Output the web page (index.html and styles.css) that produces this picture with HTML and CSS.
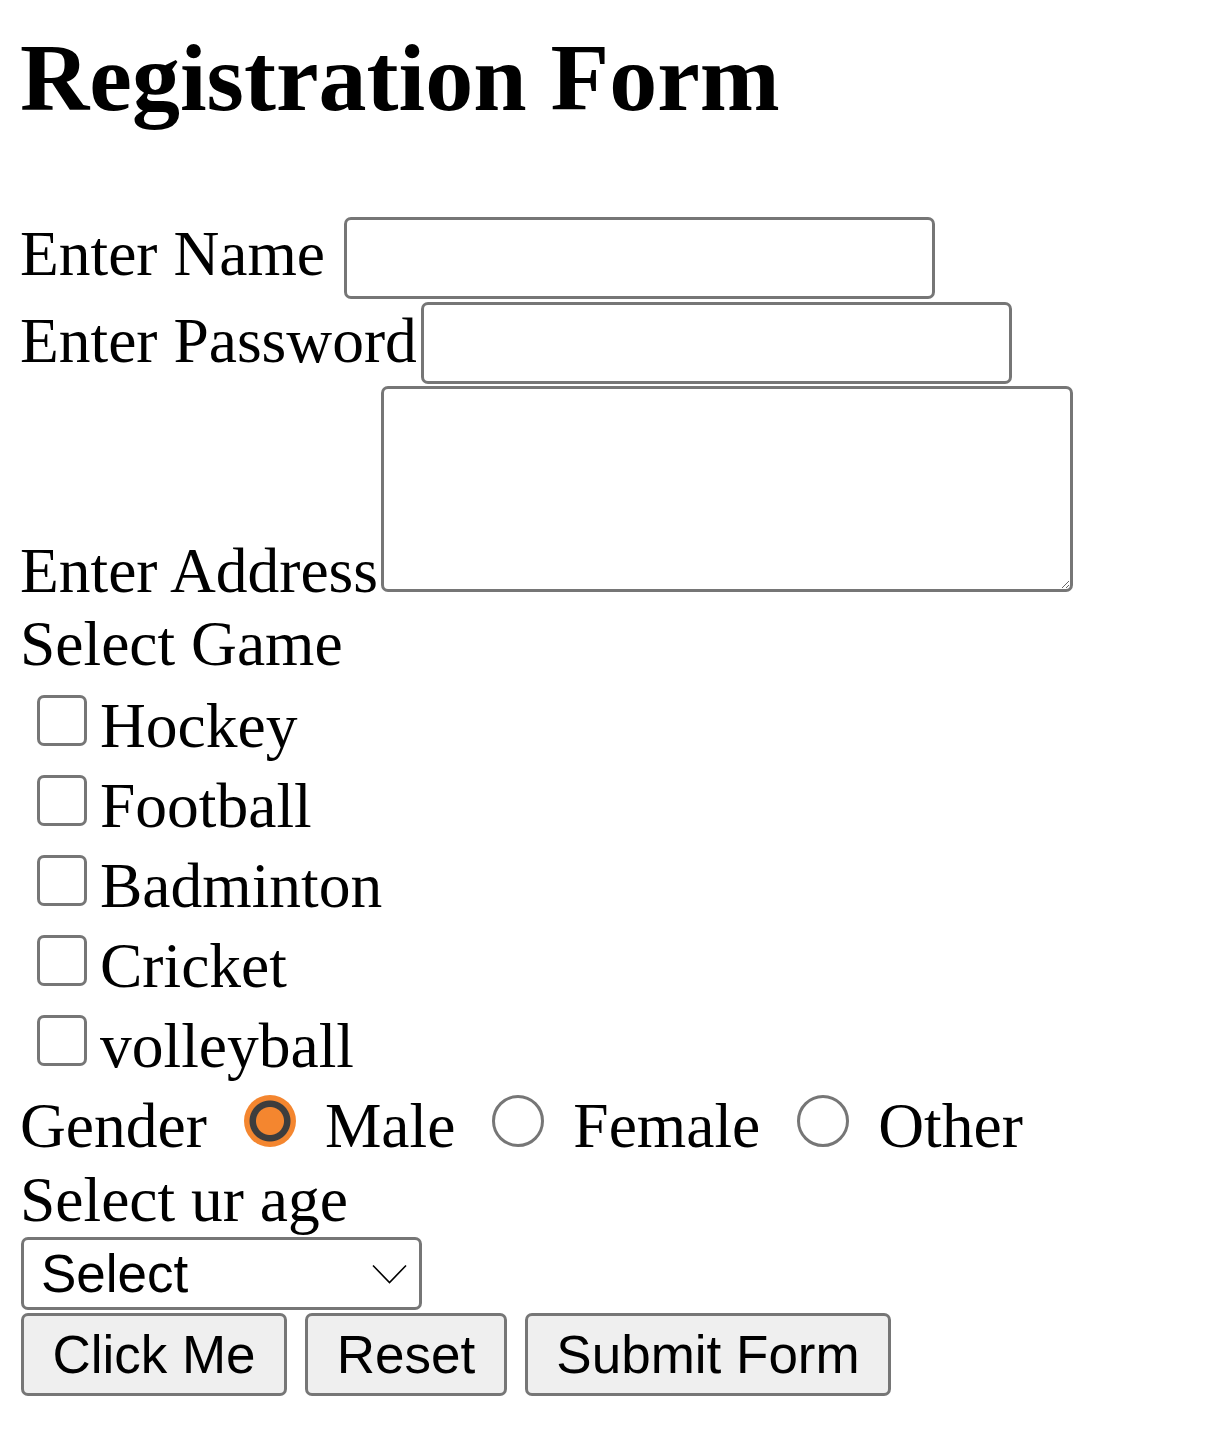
FILE: index.html
```html
<!DOCTYPE html>
<html lang="en">
<head>
<meta charset="utf-8">
<title>Registration Form</title>
<link rel="stylesheet" href="styles.css">
</head>
<body>
<div class="page">
  <h1 class="title">Registration Form</h1>
  <form class="form">
    <div class="row row-name">
      <label class="lbl lbl-name" for="name">Enter Name</label>
      <input class="field field-name" id="name" type="text">
    </div>
    <div class="row row-pass">
      <label class="lbl lbl-pass" for="pass">Enter Password</label>
      <input class="field field-pass" id="pass" type="password">
    </div>
    <div class="row row-addr">
      <label class="lbl lbl-addr" for="addr">Enter Address</label>
      <textarea class="area" id="addr"></textarea>
    </div>
    <div class="row row-text row-game">
      <span class="lbl lbl-game">Select Game</span>
    </div>
    <div class="checks">
      <div class="row row-check"><input class="chk" type="checkbox" id="g1"><label class="lbl lbl-chk" for="g1">Hockey</label></div>
      <div class="row row-check"><input class="chk" type="checkbox" id="g2"><label class="lbl lbl-chk" for="g2">Football</label></div>
      <div class="row row-check"><input class="chk" type="checkbox" id="g3"><label class="lbl lbl-chk" for="g3">Badminton</label></div>
      <div class="row row-check"><input class="chk" type="checkbox" id="g4"><label class="lbl lbl-chk" for="g4">Cricket</label></div>
      <div class="row row-check"><input class="chk" type="checkbox" id="g5"><label class="lbl lbl-chk" for="g5">volleyball</label></div>
    </div>
    <div class="row row-gender">
      <span class="lbl lbl-gender">Gender</span>
      <input class="rad" type="radio" name="gender" id="m" checked>
      <label class="lbl lbl-rad" for="m">Male</label>
      <input class="rad" type="radio" name="gender" id="f">
      <label class="lbl lbl-rad" for="f">Female</label>
      <input class="rad" type="radio" name="gender" id="o">
      <label class="lbl lbl-rad" for="o">Other</label>
    </div>
    <div class="row row-text row-age">
      <span class="lbl lbl-age">Select ur age</span>
    </div>
    <div class="select-wrap">
      <select class="sel">
        <option>Select</option>
        <option>18-25</option>
        <option>26-40</option>
        <option>40+</option>
      </select>
      <svg class="chev" width="35" height="20" viewBox="0 0 35 20" aria-hidden="true">
        <polyline points="1,1.5 17.5,18.5 34,1.5" fill="none" stroke="#000" stroke-width="1.6"/>
      </svg>
    </div>
    <div class="buttons">
      <button class="btn btn-click" type="button">Click Me</button>
      <button class="btn btn-reset" type="reset">Reset</button>
      <button class="btn btn-submit" type="submit">Submit Form</button>
    </div>
  </form>
</div>
</body>
</html>
```

FILE: styles.css
```css
html, body {
  margin: 0;
  padding: 0;
  background: #fff;
}

.page {
  padding: 0 20px;
  font-family: "Liberation Serif", "Times New Roman", serif;
  color: #000;
}

.title {
  margin: 23px 0 0;
  height: 110px;
  font-size: 96px;
  line-height: 110px;
  font-weight: bold;
}

.form {
  margin: 83px 0 0;
}

.row {
  display: flex;
  align-items: flex-start;
}

.lbl {
  font-size: 63.5px;
  line-height: 72px;
  white-space: nowrap;
}

/* text inputs */
.field {
  appearance: none;
  box-sizing: border-box;
  width: 591px;
  height: 82px;
  margin: 1px 0 0;
  padding: 0 8px;
  border: 3px solid #767676;
  border-radius: 7px;
  background: #fff;
  font-family: "Liberation Sans", Arial, sans-serif;
  font-size: 40px;
  outline: none;
}

.row-name { height: 85px; }
.lbl-name { margin-top: 2px; }
.field-name { margin-left: 19px; }

.row-pass { height: 85px; }
.lbl-pass { margin-top: 4px; }
.field-pass { margin-left: 4px; }

.row-addr { height: 207px; }
.lbl-addr { margin-top: 149px; }
.area {
  box-sizing: border-box;
  width: 692px;
  height: 206px;
  margin: 0 0 0 3px;
  padding: 4px;
  border: 3px solid #767676;
  border-radius: 7px;
  background: #fff;
  font-family: "Liberation Mono", monospace;
  font-size: 40px;
  outline: none;
}

.row-text { height: 72px; }
.row-game { margin-top: 13px; height: 74px; }
.lbl-game { margin-top: 2px; }

/* checkboxes */
.row-check { height: 80px; }
.chk {
  appearance: none;
  box-sizing: border-box;
  width: 50px;
  height: 51px;
  margin: 15px 13px 0 17px;
  border: 3px solid #767676;
  border-radius: 7px;
  background: #fff;
  flex: none;
}
.lbl-chk { margin-top: 10px; }

/* radios */
.row-gender { height: 80px; }
.lbl-gender, .lbl-rad { margin-top: 10px; }
.rad {
  appearance: none;
  box-sizing: border-box;
  width: 52px;
  height: 52px;
  margin: 15px 29px 0 37px;
  border: 3px solid #767676;
  border-radius: 50%;
  background: #fff;
  flex: none;
}
.rad:checked {
  border: 0;
  background: radial-gradient(circle at center, #f4862f 0 13.5px, #3d3d3d 14.5px 20px, #f4862f 21px);
}

.lbl-age { margin-top: 4px; }

/* select */
.select-wrap {
  position: relative;
  width: 401px;
  height: 73px;
  margin: 5px 0 0 1px;
}
.sel {
  appearance: none;
  box-sizing: border-box;
  width: 401px;
  height: 73px;
  margin: 0;
  padding: 0 0 0 17px;
  border: 3px solid #767676;
  border-radius: 7px;
  background: #fff;
  color: #000;
  font-family: "Liberation Sans", Arial, sans-serif;
  font-size: 53px;
  outline: none;
}
.chev {
  position: absolute;
  left: 351px;
  top: 27px;
  pointer-events: none;
}

/* buttons */
.buttons {
  display: flex;
  gap: 18px;
  margin: 3px 0 0 1px;
}
.btn {
  box-sizing: border-box;
  height: 83px;
  margin: 0;
  padding: 0;
  border: 3px solid #767676;
  border-radius: 7px;
  background: #efefef;
  color: #000;
  font-family: "Liberation Sans", Arial, sans-serif;
  font-size: 53px;
  line-height: 1;
  text-align: center;
}
.btn-click { width: 266px; }
.btn-reset { width: 202px; }
.btn-submit { width: 366px; }
```
